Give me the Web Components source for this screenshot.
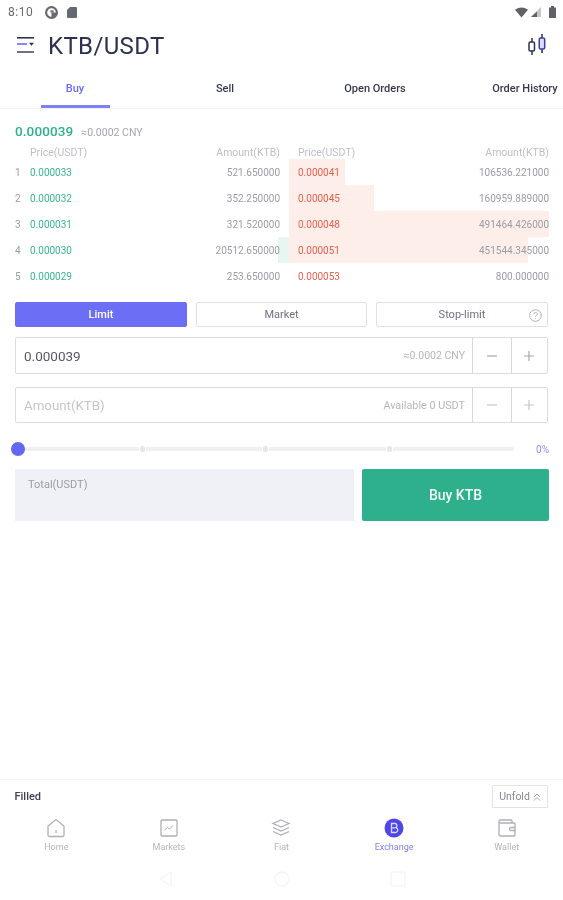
<!DOCTYPE html>
<html lang="en">
<head>
<meta charset="utf-8">
<title>KTB/USDT</title>
<style>
html,body{margin:0;padding:0;background:#fff}
body{width:563px;height:900px;overflow:hidden;display:flex;flex-direction:column;font-family:Roboto,"Liberation Sans",sans-serif;color:#3a3f55;filter:blur(.45px)}
.grow{flex:1}
</style>
</head>
<body>
<status-bar></status-bar>
<app-header title="KTB/USDT"></app-header>
<tab-strip></tab-strip>
<order-book></order-book>
<order-types></order-types>
<stepper-input value="0.000039" note="≈0.0002 CNY"></stepper-input>
<stepper-input placeholder="Amount(KTB)" note="Available 0 USDT" dim></stepper-input>
<pct-slider></pct-slider>
<trade-action></trade-action>
<div class="grow"></div>
<filled-bar></filled-bar>
<bottom-nav></bottom-nav>
<sys-nav></sys-nav>
<script>
const def=(name,html,setup)=>customElements.define(name,class extends HTMLElement{
  connectedCallback(){
    const r=this.attachShadow({mode:'open'});
    r.innerHTML=typeof html==='function'?html(this):html;
    if(setup)setup(r,this);
  }
});

def('status-bar',`<style>
:host{display:flex;align-items:center;height:24px;padding:0 7px 0 8px;font-size:12px;color:#666a70;gap:0;flex:none}
.t{letter-spacing:.5px;width:36px}
svg{display:block}
.sp{flex:1}
</style>
<span class="t">8:10</span>
<svg width="13" height="13" viewBox="0 0 12 12" style="margin-left:1px"><circle cx="6" cy="6" r="5" fill="none" stroke="#666a70" stroke-width="2"/><path d="M6 6h5a5 5 0 0 1-5 5z" fill="#666a70"/><path d="M5 4h3v2H5z" fill="#666a70"/></svg>
<svg width="10" height="12" viewBox="0 0 10 12" style="margin-left:9px"><path d="M3 1h6a1 1 0 0 1 1 1v9a1 1 0 0 1-1 1H1a1 1 0 0 1-1-1V4z" fill="#666a70"/></svg>
<span class="sp"></span>
<svg width="13" height="11" viewBox="0 0 14 11"><path d="M0 2.500Q7-2 14 2.500L7 11z" fill="#5f6368"/></svg>
<svg width="10" height="10" viewBox="0 0 10 10" style="margin-left:3px"><path d="M10 0v10H0z" fill="#c4c6c9"/><path d="M6 4.500v5.500H0z" fill="#5f6368"/></svg>
<svg width="7" height="12" viewBox="0 0 7 12" style="margin-left:8px"><path d="M2 0h3v1.500h2V12H0V1.500h2z" fill="#5f6368"/></svg>`);

def('app-header',h=>`<style>
:host{display:flex;align-items:center;height:46px;padding:0 16px 0 17px;flex:none}
h1{margin:0 0 2px 13px;font:400 24px/1 Roboto,sans-serif;color:#2c3150;letter-spacing:.35px;flex:1}
svg{display:block}
.menu{margin-bottom:2px}
.candle{margin-bottom:4px}
</style>
<svg class="menu" width="18" height="18" viewBox="0 0 18 18"><path d="M0 .8h17" stroke="#2c3150" stroke-width="1.600"/><path d="M0 7h10" stroke="#6a6cf6" stroke-width="1.600"/><path d="M12 5.700h5l-2.500 3z" fill="#2c3150"/><path d="M0 15h17" stroke="#4a4e66" stroke-width="1.600"/></svg>
<h1>${h.getAttribute('title')}</h1>
<svg class="candle" width="20" height="22" viewBox="0 0 20 22" fill="none" stroke="#2c3150" stroke-width="1.500"><path d="M5 4v4M5 17v4M15 0v4M15 15v4"/><rect x="2" y="8" width="5.500" height="9" rx="1.500" fill="#fff"/><rect x="12.200" y="4" width="5.500" height="11" rx="1.500" fill="#dcdcfb" stroke="#3a3fa8"/></svg>`);

def('tab-strip',`<style>
:host{display:flex;height:39px;border-bottom:1px solid #f1f2f5;overflow:hidden;flex:none;box-sizing:border-box}
.tab{flex:none;width:150px;position:relative;display:flex;justify-content:center;padding-top:11px;font:500 11px/15px Roboto,sans-serif;color:#34394f;box-sizing:border-box;white-space:nowrap}
.on{color:#6a6cf6}
.on::after{content:"";position:absolute;left:41px;width:69px;bottom:0;height:3px;background:#7f80f4}
</style>
<div class="tab on">Buy</div><div class="tab">Sell</div><div class="tab">Open Orders</div><div class="tab">Order History</div>`);

const asks=[['0.000041','106536.221000','21.5%'],['0.000045','160959.889000','32.7%'],['0.000048','491464.426000','100%'],['0.000051','451544.345000','92%'],['0.000053','800.000000','0%']];
const bids=[['0.000033','521.650000','0%'],['0.000032','352.250000','0%'],['0.000031','321.520000','0%'],['0.000030','20512.650000','4%'],['0.000029','253.650000','0%']];
def('order-book',`<style>
:host{display:block;padding:0 14px 0 15px;flex:none;font-size:10px;color:#9a9da6}
.last{display:flex;align-items:baseline;height:33px;padding-top:13px;box-sizing:border-box;gap:8px}
.last b{font:500 13.500px/19px Roboto,sans-serif;color:#2db08c;letter-spacing:.1px}
.last span{font-size:10.500px;color:#a3a6ad}
.grid{display:grid;grid-template-columns:274px 260px}
.head,.row{display:flex;align-items:center;justify-content:space-between}
.head{height:17px;color:#bcbfc8;font-size:10.500px;padding-top:3px;box-sizing:border-box}
.row{height:26px}
.l{padding-right:9px}
.r{padding-left:9px}
.head.l{padding-left:15px}
.i{width:15px;flex:none;color:#9a9da6}
.p{flex:1}
.g{color:#39b592}
.s{color:#e9604f}
.bl{background:linear-gradient(to left,#e7f6f1 var(--d),transparent 0)}
.br{background:linear-gradient(to right,#fdeee9 var(--d),transparent 0)}
</style>
<div class="last"><b>0.000039</b><span>≈0.0002 CNY</span></div>
<div class="grid" id="g">
<div class="head l"><span>Price(USDT)</span><span>Amount(KTB)</span></div>
<div class="head r"><span>Price(USDT)</span><span>Amount(KTB)</span></div>
</div>`,r=>{
  const g=r.getElementById('g');
  bids.forEach((b,i)=>{
    const a=asks[i];
    g.insertAdjacentHTML('beforeend',`<div class="row l bl" style="--d:${b[2]}"><span class="i">${i+1}</span><span class="p g">${b[0]}</span><span>${b[1]}</span></div><div class="row r br" style="--d:${a[2]}"><span class="p s">${a[0]}</span><span>${a[1]}</span></div>`);
  });
});

def('order-types',`<style>
:host{display:grid;grid-template-columns:172px 171px 172px;gap:9px;padding:0 15px;margin-top:13px;flex:none;height:25px;box-sizing:content-box}
div{position:relative;display:flex;align-items:center;justify-content:center;border:1px solid #dfe1e8;border-radius:2px;font-size:11px;color:#6d7180;box-sizing:border-box}
.on{background:#6c6ef5;border-color:#6c6ef5;color:#fff;font-weight:500}
svg{position:absolute;right:5px;top:5.500px}
</style>
<div class="on">Limit</div><div>Market</div>
<div>Stop-limit<svg width="13" height="13" viewBox="0 0 13 13" fill="none" stroke="#aeb1b9"><circle cx="6.500" cy="6.500" r="5.800"/><path d="M4.800 5.200a1.700 1.700 0 1 1 2.500 1.500c-.6.3-.8.6-.8 1.200M6.500 9.300v.8"/></svg></div>`);

def('stepper-input',h=>{
  const dim=h.hasAttribute('dim');
  const v=h.getAttribute('value'),p=h.getAttribute('placeholder');
  return `<style>
:host{display:block;padding:0 15px 0 15px;margin-top:${dim?13:10}px;flex:none}
.box{display:flex;align-items:center;height:${dim?36:37}px;border:1.500px solid #dcdde1;border-radius:2px;box-sizing:border-box}
.v{flex:1;padding-left:8px;font-size:${v?13.5:13.3}px;color:${v?'#555a66':'#c4c6cc'}}
.n{font-size:${dim?10.8:10.5}px;color:#b4b7bd;padding-right:7px}
.b{width:38.500px;align-self:stretch;display:flex;align-items:center;justify-content:center;border-left:1.500px solid #d6d7db;box-sizing:border-box}
.b:last-child{width:36.500px}
svg{display:block}
</style>
<div class="box"><span class="v">${v||p}</span><span class="n">${h.getAttribute('note')}</span>
<span class="b"><svg width="12" height="12" viewBox="0 0 12 12"><path d="M1 6h10" stroke="${dim?'#c6c8cc':'#a5a7ad'}" stroke-width="1.200"/></svg></span>
<span class="b"><svg width="12" height="12" viewBox="0 0 12 12"><path d="M1 6h10M6 1v10" stroke="${dim?'#c6c8cc':'#a5a7ad'}" stroke-width="1.200"/></svg></span></div>`;
});

def('pct-slider',`<style>
:host{display:flex;align-items:center;padding:0 14px 0 11px;height:14px;margin-top:19px;flex:none}
.track{flex:1;position:relative;height:4px;background:#eef0f2;border-radius:2px;margin-right:22px}
.thumb{position:absolute;left:0;top:-5px;width:14px;height:14px;border-radius:50%;background:#6567ef}
.tick{position:absolute;top:-1px;width:5px;height:6px;border-radius:2px;background:#e6e8ea;box-shadow:0 0 0 1px #fff;margin-left:-2.500px}
span{font-size:10px;color:#8d8ff2}
</style>
<div class="track"><i class="tick" style="left:131px"></i><i class="tick" style="left:254px"></i><i class="tick" style="left:378px"></i><i class="thumb"></i></div><span>0%</span>`);

def('trade-action',`<style>
:host{display:flex;gap:8px;padding:0 14px 0 15px;margin-top:13px;height:52px;flex:none}
.t{flex:none;width:339px;background:#f0f1f7;font-size:11px;color:#9a9da6;padding:9px 0 0 13px;box-sizing:border-box}
.b{flex:1;background:#2fb08d;border-radius:2px;color:#f2fbf8;font:500 14px/52px Roboto,sans-serif;text-align:center}
</style><div class="t">Total(USDT)</div><div class="b">Buy KTB</div>`);

def('filled-bar',`<style>
:host{display:flex;align-items:center;justify-content:space-between;height:31px;padding:0 15px 0 14.500px;border-top:1px solid #f6f6f8;flex:none;box-sizing:border-box}
b{font:500 11px Roboto,sans-serif;color:#3e4353;margin-top:2px}
span{display:flex;align-items:center;justify-content:center;gap:3px;width:56px;height:23px;border:1px solid #e2e3e7;font-size:10.500px;color:#868a96;box-sizing:border-box;border-radius:1px;margin-top:3px}
</style><b>Filled</b><span>Unfold<svg width="8" height="8" viewBox="0 0 8 8" fill="none" stroke="#a6a9b2"><path d="M1 4l3-3 3 3M1 7.500l3-3 3 3"/></svg></span>`);

const g='fill="none" stroke="#adb0b6" stroke-width="1.300"';
const items=[
['Home',`<svg width="20" height="20" viewBox="0 0 20 20" ${g}><path d="M2 8l8-6.500L18 8v9a1.500 1.500 0 0 1-1.500 1.500h-13A1.500 1.500 0 0 1 2 17z"/><path d="M10 12v3"/></svg>`],
['Markets',`<svg width="20" height="20" viewBox="0 0 20 20" ${g}><rect x="2" y="2" width="16" height="16" rx="1"/><path d="M5.500 12l3-2.500 2 1.500 3.500-3.500" stroke-width="1"/></svg>`],
['Fiat',`<svg width="20" height="20" viewBox="0 0 20 20" ${g}><path d="M10 2l8 3.500-8 3.500-8-3.500zM2 9.500l8 3.500 8-3.500M2 13.500l8 3.500 8-3.500"/></svg>`],
['Exchange',`<svg width="20" height="20" viewBox="0 0 20 20"><circle cx="10" cy="10" r="9.500" fill="#4f46e5"/><path d="M7.500 5.500h3.200a2.200 2.200 0 0 1 1 4.200 2.300 2.300 0 0 1-.8 4.800H7.500zM7.500 9.800h3.500" fill="none" stroke="#d9d8ff" stroke-width="1.300"/></svg>`],
['Wallet',`<svg width="20" height="20" viewBox="0 0 20 20" ${g}><path d="M15 5V3a1 1 0 0 0-1-1H3.500A1.500 1.500 0 0 0 2 3.500V16a2 2 0 0 0 2 2h13a1 1 0 0 0 1-1V6a1 1 0 0 0-1-1H2"/><path d="M18 9.500h-4a1.500 1.500 0 0 0 0 3h4"/></svg>`]];
def('bottom-nav',`<style>
:host{display:grid;grid-template-columns:repeat(5,1fr);height:48px;flex:none}
a{display:flex;flex-direction:column;align-items:center;padding-top:8px;font-size:9px;color:#b3b5bb;gap:4px;box-sizing:border-box}
a.on{color:#8183f0}
svg{display:block}
</style>`+items.map(([t,s])=>`<a class="${t==='Exchange'?'on':''}">${s}<span>${t}</span></a>`).join(''));

def('sys-nav',`<style>
:host{display:flex;justify-content:center;align-items:center;height:42px;gap:0;flex:none;padding-bottom:0}
svg{display:block;margin:0 50px}
</style>
<svg width="16" height="16" viewBox="0 0 16 16" fill="none" stroke="#f5f5f6" stroke-width="1.300"><path d="M13 1v14L2 8z"/></svg>
<svg width="16" height="16" viewBox="0 0 16 16" fill="none" stroke="#f5f5f6" stroke-width="1.300"><circle cx="8" cy="8" r="7"/></svg>
<svg width="16" height="16" viewBox="0 0 16 16" fill="none" stroke="#f5f5f6" stroke-width="1.300"><rect x="1" y="1" width="14" height="14"/></svg>`);
</script>
</body>
</html>
